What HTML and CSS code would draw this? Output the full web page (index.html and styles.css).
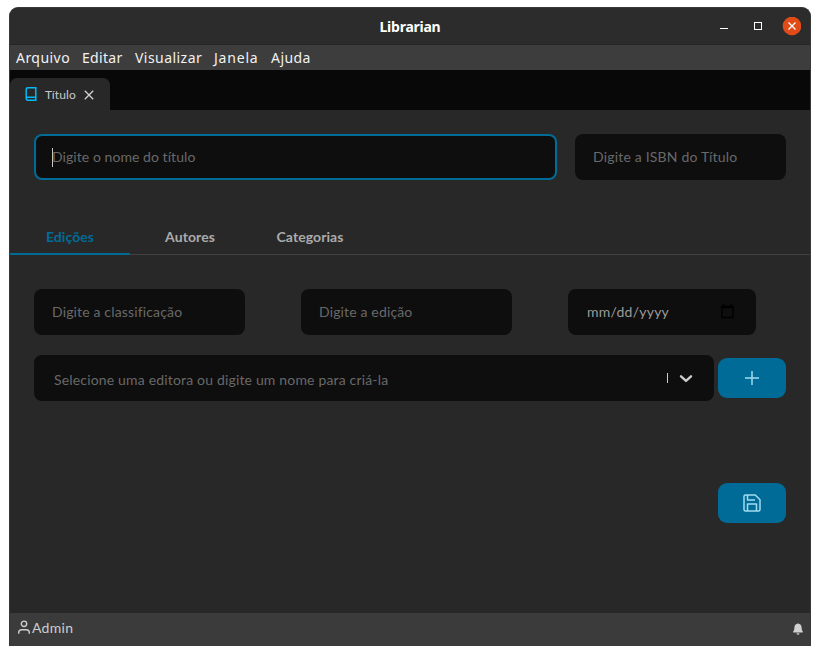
FILE: index.html
```html
<!DOCTYPE html>
<html lang="pt-BR">
<head>
<meta charset="utf-8">
<title>Librarian</title>
<link rel="stylesheet" href="styles.css">
</head>
<body>
<div class="window">
  <header class="titlebar">
    <h1>Librarian</h1>
    <div class="controls">
      <svg width="82" height="20" viewBox="0 0 82 20"><path d="M1 11.5h8" stroke="#fff"/><rect x="35.5" y="5.500" width="7" height="7" fill="none" stroke="#fff"/><circle cx="73" cy="9" r="9.300" fill="#e04b18"/><path d="M69.500 5.500l7 7m0-7l-7 7" stroke="#fff" stroke-width="1.300"/></svg>
    </div>
  </header>
  <nav class="menu"><span class="m1">Arquivo</span><span class="m2">Editar</span><span class="m3">Visualizar</span><span class="m4">Janela</span><span class="m5">Ajuda</span></nav>
  <div class="tabbar">
    <div class="doc-tab">
      <svg width="12" height="14" viewBox="0 0 12 14" fill="none" stroke="#00b9f5" stroke-width="1.500"><path d="M10.800 10.200V.8H3Q1.200.8 1.200 2.500v9.200Q1.200 13.200 3 13.200h7.800v-3H3q-1.800 0-1.800 1.500"/></svg>
      <span>Título</span>
      <svg class="x" width="10" height="10" viewBox="0 0 10 10"><path d="M.8.8l8.400 8.400m0-8.400L.8 9.200" stroke="#d2d2d2" stroke-width="1.300"/></svg>
    </div>
  </div>
  <main>
    <div class="row title-row">
      <div class="field focused"><i class="caret"></i><span>Digite o nome do título</span></div>
      <div class="field small isbn"><span>Digite a ISBN do Título</span></div>
    </div>
    <div class="tabs"><div class="active"><span>Edições</span></div><div><span>Autores</span></div><div><span>Categorias</span></div></div>
    <div class="row edition-row">
      <div class="field small"><span>Digite a classificação</span></div>
      <div class="field small"><span>Digite a edição</span></div>
      <div class="field date"><span>mm/dd/yyyy</span>
        <svg width="13" height="15" viewBox="0 0 13 15"><path d="M1 2.500h11v11H1z" fill="none" stroke="#000" stroke-width="1.300"/><path d="M.4 2h12.200v2.300H.4zM2 0h1.500v2H2zm7.500 0H11v2H9.500z"/></svg>
      </div>
    </div>
    <div class="row select-row">
      <div class="field select"><span>Selecione uma editora ou digite um nome para criá-la</span><i class="separator"></i>
        <svg width="14" height="9" viewBox="0 0 14 9"><path d="M2 2.300L7 6.900l5-4.600" fill="none" stroke="#ccc" stroke-width="2.400" stroke-linecap="round" stroke-linejoin="round"/></svg>
      </div>
      <div class="button"><svg width="14" height="14" viewBox="0 0 14 14"><path d="M7 0v14M0 7h14" stroke="#a2dcf1" stroke-width="1.500"/></svg></div>
    </div>
    <div class="save-row"><div class="button"><svg width="18" height="18" viewBox="0 0 18 18" fill="none" stroke="#a2dcf1" stroke-width="1.500" stroke-linejoin="round"><path d="M2.500 1h9.800L17 5.700v9.800q0 1.500-1.500 1.500h-13Q1 17 1 15.500v-13Q1 1 2.500 1zM4.500 1v5H12M4.500 17v-7h9v7"/></svg></div></div>
  </main>
  <footer>
    <svg class="user" width="12" height="15" viewBox="0 0 12 15" fill="none" stroke="#ccc" stroke-width="1.400"><circle cx="6" cy="3.800" r="2.700"/><path d="M.7 13.800v-1q0-3 3-3h4.600q3 0 3 3v1"/></svg>
    <span>Admin</span>
    <svg class="bell" width="10" height="12" viewBox="0 0 10 12" fill="#d0d0d0"><path d="M4.300.7Q5-.3 5.700.7q2.900.7 2.900 3.800 0 3 1.300 4.200.3.800-.4.900H.5Q-.2 9.500.1 8.700 1.400 7.500 1.400 4.500q0-3.100 2.900-3.800zM3.500 10.300h3q-.2 1.500-1.500 1.500t-1.500-1.500z"/></svg>
  </footer>
</div>
</body>
</html>
```
FILE: styles.css
```css
* { box-sizing: border-box; }
body { margin: 0; padding: 7px 9px 9px; background: #fff; font: 14px/20px Lato, sans-serif; }
.window { width: 802px; height: 639px; border: 1px solid #383838; border-bottom: 0; border-radius: 9px 9px 0 0; overflow: hidden; background: #282828; }
.titlebar { height: 37px; display: grid; grid-template-columns: 1fr auto 1fr; align-items: center; background: #2c2c2c; border-bottom: 1px solid #252525; }
h1 { margin: 2px 0 0; grid-column: 2; font: bold 14px/20px "Noto Sans", sans-serif; color: #fff; letter-spacing: -.25px; }
.controls { display: flex; justify-content: flex-end; padding: 1px 9px 0 0; }
svg { display: block; flex: none; }
.menu { height: 25px; display: flex; align-items: center; padding-left: 6px; background: #3d3d3d; color: #f2f2f2; font: 14px/25px "Noto Sans", sans-serif; letter-spacing: .45px; }
.menu span { margin-right: 12px; white-space: nowrap; }
.m1 { width: 54px; } .m2 { width: 41px; letter-spacing: .3px; } .m3 { width: 67px; } .m4 { width: 45px; letter-spacing: .8px; } .m5 { width: 40px; }
.tabbar { height: 40px; padding-top: 8px; background: #080808; }
.doc-tab { width: 100px; height: 32px; display: flex; align-items: center; padding-left: 15px; border-radius: 7px 7px 0 0; background: #282828; color: #c8c8c8; font-size: 12px; letter-spacing: .15px; }
.doc-tab span { width: 32px; margin: 2px 7px 0 8px; }
.x { margin-top: 1px; }
main { height: 503px; padding-top: 24px; }
.row { display: flex; margin-left: 24px; margin-right: 24px; }
.title-row { gap: 18px; }
.field { height: 46px; display: flex; align-items: center; padding-left: 18px; border-radius: 8px; background: #0e0e0e; color: #696969; white-space: nowrap; letter-spacing: .15px; }
.focused { width: 523px; padding-left: 16px; border: 2px solid #006b96; letter-spacing: .06px; }
.isbn { letter-spacing: .19px; }
.caret { width: 1px; height: 19px; margin-right: -1px; background: #c8c8c8; }
.small { width: 211px; }
.tabs { height: 35px; margin-top: 40px; display: flex; border-bottom: 1px solid #414141; color: #ababab; font-weight: bold; letter-spacing: .08px; }
.tabs div { width: 120px; height: 35px; padding-top: 7px; text-align: center; }
.tabs .active { color: #006b96; border-bottom: 2px solid #006b96; }
.edition-row { gap: 56px; margin-top: 34px; }
.date { width: 188px; justify-content: space-between; padding-left: 19px; padding-right: 22px; color: #9b9b9b; letter-spacing: .25px; }
.date svg { margin-top: -2px; }
.select-row { align-items: center; gap: 4px; margin-top: 20px; }
.select { width: 680px; padding-left: 20px; padding-right: 21px; letter-spacing: .17px; }
.select span { margin-top: 4px; }
.separator { width: 1px; height: 10px; margin-left: auto; margin-right: 11px; background: #ccc; }
.button { width: 68px; height: 40px; display: grid; place-items: center; border-radius: 9px; background: #006b96; }
.save-row { display: flex; justify-content: flex-end; padding-right: 24px; margin-top: 82px; }
footer { height: 33px; display: flex; align-items: center; padding: 0 7px 3px 8px; background: #3b3b3b; color: #ccc; }
footer span { margin-left: 2px; letter-spacing: .3px; }
.user { margin-top: -2px; }
.bell { margin-left: auto; margin-top: 2px; }
```
